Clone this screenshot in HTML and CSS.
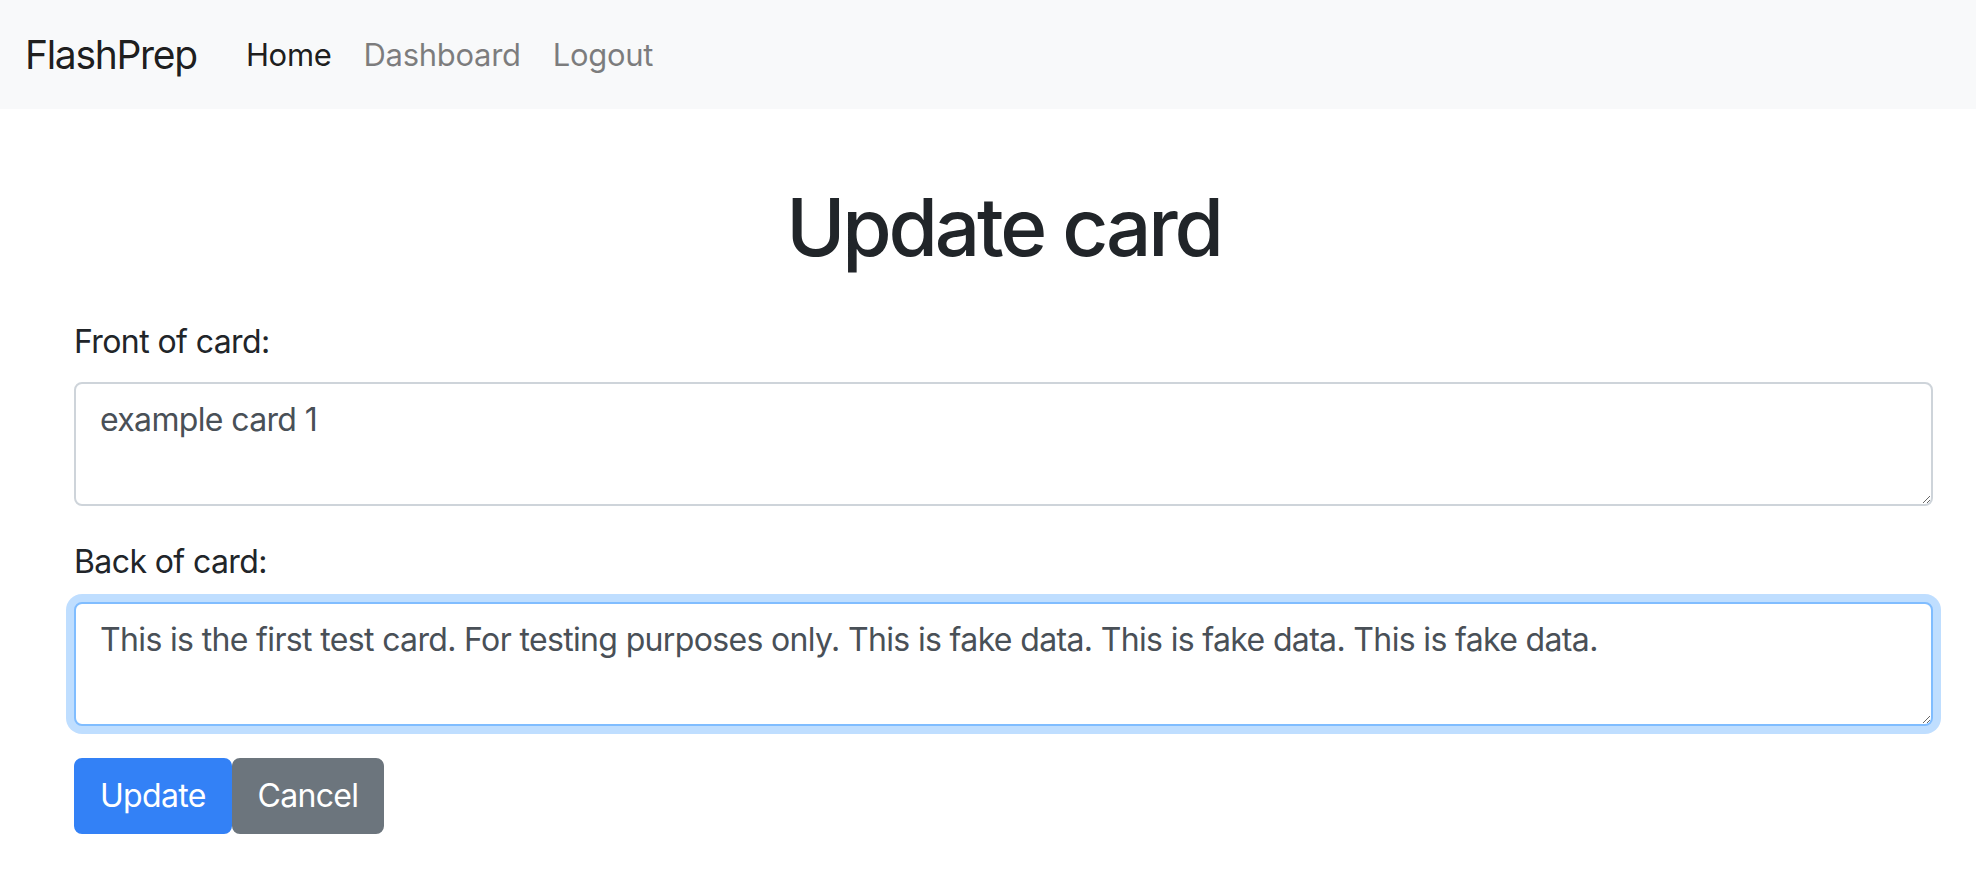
FILE: index.html
```html
<!DOCTYPE html>
<html lang="en">
<head>
<meta charset="utf-8">
<title>FlashPrep - Update card</title>
<link rel="stylesheet" href="styles.css">
</head>
<body>
<nav class="navbar">
  <a class="brand" href="#">FlashPrep</a>
  <ul class="nav">
    <li><a class="nav-link active" href="#">Home</a></li>
    <li><a class="nav-link" href="#">Dashboard</a></li>
    <li><a class="nav-link" href="#">Logout</a></li>
  </ul>
</nav>
<main class="container">
  <h1 class="title">Update card</h1>
  <form class="form">
    <div class="form-group">
      <label class="label" for="front">Front of card:</label>
      <textarea class="control" id="front" rows="2">example card 1</textarea>
    </div>
    <div class="form-group">
      <label class="label" for="back">Back of card:</label>
      <textarea class="control focused" id="back" rows="2">This is the first test card. For testing purposes only. This is fake data. This is fake data. This is fake data.</textarea>
    </div>
    <div class="actions">
      <button type="button" class="btn btn-primary">Update</button>
      <button type="button" class="btn btn-secondary">Cancel</button>
    </div>
  </form>
</main>
</body>
</html>
```
FILE: styles.css
```css
* { box-sizing: border-box; }
html, body { margin: 0; padding: 0; }
body {
  font-family: "Inter", "Noto Sans", "Liberation Sans", sans-serif;
  font-size: 32px;
  line-height: 48px;
  color: #212529;
  background: #fff;
}
.navbar {
  display: flex;
  align-items: center;
  height: 109px;
  padding: 0 25px;
  background: #f8f9fa;
}
.brand {
  font-size: 39px;
  line-height: 60px;
  color: rgba(0,0,0,.9);
  text-decoration: none;
  margin-right: 33px;
  letter-spacing: -1.3px;
}
.nav {
  display: flex;
  list-style: none;
  margin: 0;
  padding: 0;
}
.nav-link {
  display: block;
  padding: 0 16px;
  font-size: 31px;
  color: rgba(0,0,0,.5);
  text-decoration: none;
  letter-spacing: -0.3px;
}
.nav-link.active { color: rgba(0,0,0,.9); }
.container {
  padding: 0 43px 0 74px;
}
.title {
  margin: 70px 0 43px;
  text-align: center;
  font-size: 80px;
  line-height: 96px;
  font-weight: 500;
  letter-spacing: -3.2px;
}
.form-group { margin-bottom: 32px; }
.label {
  display: block;
  margin-bottom: 16px;
  letter-spacing: -0.6px;
}
.control {
  display: block;
  width: 100%;
  height: 124px;
  padding: 12px 24px;
  font-family: inherit;
  font-size: 32px;
  line-height: 48px;
  color: #495057;
  background: #fff;
  border: 2px solid #ced4da;
  border-radius: 8px;
  letter-spacing: -0.65px;
  outline: none;
}
.control.focused {
  border-color: #80bdff;
  box-shadow: 0 0 0 8px rgba(0,123,255,.25);
}
.actions { display: flex; }
.btn {
  height: 76px;
  padding: 0 24px;
  font-family: inherit;
  font-size: 32px;
  line-height: 48px;
  color: #fff;
  border: 2px solid transparent;
  border-radius: 8px;
  letter-spacing: -0.7px;
  cursor: pointer;
}
.btn-primary { background: #3381f6; border-color: #3381f6; }
.btn-secondary { background: #6c757d; border-color: #6c757d; }
```
